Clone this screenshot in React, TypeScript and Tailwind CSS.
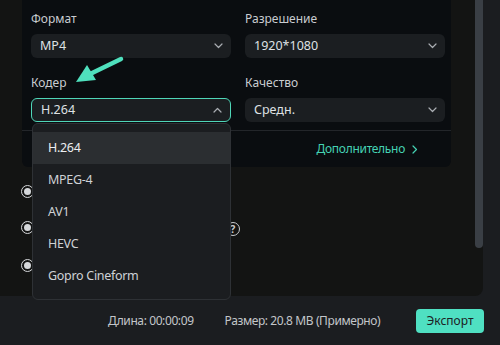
import React from "react";

/* ================== ICONS ================== */
const Chevron = ({ up = false }: { up?: boolean }) => (
  <svg width="9" height="6" viewBox="0 0 9 6" fill="none" className="text-[#a9adb2]">
    <path d={up ? "M1 5L4.5 1.5L8 5" : "M1 1L4.5 4.5L8 1"} stroke="currentColor" strokeWidth="1.2" strokeLinecap="round" strokeLinejoin="round" />
  </svg>
);

const Radio = () => (
  <span className="w-[13px] h-[13px] rounded-full border-[1.5px] border-[#d5d7da] flex items-center justify-center">
    <span className="w-[7px] h-[7px] rounded-full bg-[#d5d7da]" />
  </span>
);

const Select = ({ value, open = false }: { value: string; open?: boolean }) => (
  <div
    className={`h-6 rounded-md bg-[#1b1e21] flex items-center justify-between pl-[9px] pr-[8px] text-[12.5px] text-[#dfe1e4] ${
      open ? "border border-[#4fd6b8]" : ""
    }`}
  >
    <span>{value}</span>
    <Chevron up={open} />
  </div>
);

const codecs = ["H.264", "MPEG-4", "AV1", "HEVC", "Gopro Cineform"];

/* ================== COMPONENT ================== */
const App: React.FC = () => {
  return (
    <div className="w-[500px] h-[345px] bg-[#1b1d20] flex flex-col overflow-hidden" style={{ fontFamily: '"Noto Sans", "Open Sans", sans-serif' }}>
      {/* Top area */}
      <div className="flex h-[296px]">
        <div className="relative w-[483px] h-full bg-[#131413] rounded-br-lg flex">
          {/* Settings card */}
          <div className="ml-[22px] w-[429px] flex flex-col">
            <div className="bg-[#0a0d10] rounded-b-md">
              <div className="grid grid-cols-2 gap-x-[14px] pl-[9px] pr-[6px] pt-[11px]">
                <div>
                  <div className="text-xs leading-4 text-[#c9ccd0] mb-[7px]">Формат</div>
                  <Select value="MP4" />
                </div>
                <div>
                  <div className="text-xs leading-4 text-[#c9ccd0] mb-[7px]">Разрешение</div>
                  <Select value="1920*1080" />
                </div>
                <div className="mt-[17px] relative">
                  <div className="text-xs leading-4 text-[#c9ccd0] mb-[7px]">Кодер</div>
                  <Select value="H.264" open />
                </div>
                <div className="mt-[17px]">
                  <div className="text-xs leading-4 text-[#c9ccd0] mb-[7px]">Качество</div>
                  <Select value="Средн." />
                </div>
              </div>
              <div className="mt-2 border-t border-[#23262a] h-[37px] flex items-center justify-end pr-[33px] gap-[7px] text-xs tracking-[-0.3px] text-[#45d3b4]">
                <span>Дополнительно</span>
                <svg width="6" height="9" viewBox="0 0 6 9" fill="none">
                  <path d="M1 1L4.5 4.5L1 8" stroke="currentColor" strokeWidth="1.2" strokeLinecap="round" strokeLinejoin="round" />
                </svg>
              </div>
            </div>

            {/* Radio options */}
            <div className="flex flex-col -ml-[1px]">
              <div className="flex items-center h-[13px] mt-[18px]">
                <Radio />
              </div>
              <div className="flex items-center h-[13px] mt-[23px]">
                <Radio />
                <span className="ml-[192px] mt-[3px] w-[14px] h-[14px] shrink-0 rounded-full border-[1.5px] border-[#c9ccd0] text-[#c9ccd0] text-[10px] font-bold leading-none flex items-center justify-center">
                  ?
                </span>
              </div>
              <div className="flex items-center h-[13px] mt-[25px]">
                <Radio />
              </div>
            </div>
          </div>

          {/* Scrollbar */}
          <div className="ml-auto w-2 h-[248px] bg-[#3a3f45] rounded-b-sm" />

          {/* Codec dropdown */}
          <div className="absolute left-[32px] top-[123px] w-[199px] h-[177px] z-10 bg-[#1b1d20] border border-[#2e3135] rounded-md pt-2">
            {codecs.map((c, i) => (
              <div
                key={c}
                className={`h-8 flex items-center pl-[15px] text-[12.5px] tracking-[-0.3px] ${i === 0 ? "bg-[#2b2e31] text-[#eceef0]" : "text-[#cfd2d6]"}`}
              >
                {c}
              </div>
            ))}
          </div>

          {/* Annotation arrow */}
          <svg className="absolute left-[70px] top-[52px] z-20" width="60" height="36" viewBox="0 0 60 36" fill="none">
            <path d="M51 7L18 23" stroke="#4fe0bd" strokeWidth="4.5" strokeLinecap="round" />
            <path d="M6 30L17 13L26 28Z" fill="#4fe0bd" />
          </svg>
        </div>
      </div>

      {/* Footer */}
      <div className="flex-1 flex items-center">
        <span className="ml-[108px] text-xs tracking-[-0.4px] text-[#c3c6ca]">Длина: 00:00:09</span>
        <span className="ml-[31px] text-xs tracking-[-0.4px] text-[#c3c6ca]">Размер: 20.8 MB (Примерно)</span>
        <button className="ml-auto mr-4 w-[68px] h-6 rounded bg-[#4fe0c2] text-xs text-[#1d2124]">Экспорт</button>
      </div>
    </div>
  );
};

export default App;
